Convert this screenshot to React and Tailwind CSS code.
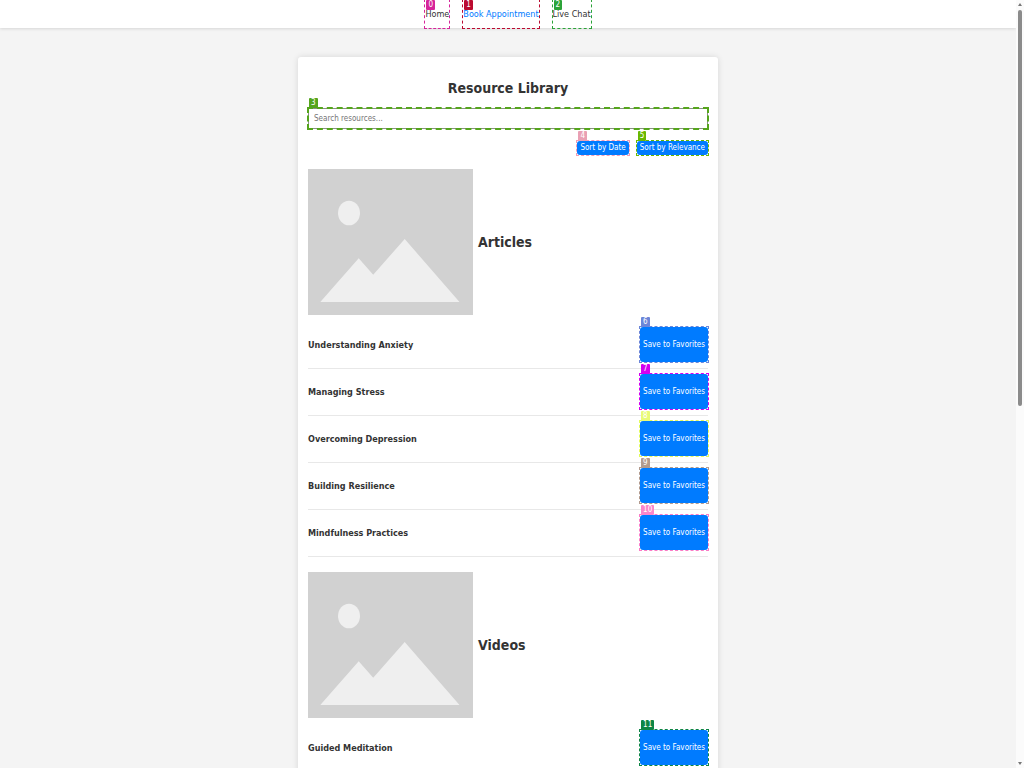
import React from "react";

const links = [
  { text: "Home", color: "text-[#333]", line: "border-[#d6249a]", fill: "bg-[#d6249a]" },
  { text: "Book Appointment", color: "text-[#007bff]", line: "border-[#bb0a30]", fill: "bg-[#bb0a30]" },
  { text: "Live Chat", color: "text-[#333]", line: "border-[#2ba338]", fill: "bg-[#2ba338]" },
];

const articles = [
  { title: "Understanding Anxiety", n: 6, line: "border-[#6c86d8]", fill: "bg-[#6c86d8]" },
  { title: "Managing Stress", n: 7, line: "border-[#d400f0]", fill: "bg-[#d400f0]" },
  { title: "Overcoming Depression", n: 8, line: "border-[#e2fa5a]", fill: "bg-[#e9fb78]" },
  { title: "Building Resilience", n: 9, line: "border-[#b39b8e]", fill: "bg-[#b39b8e]" },
  { title: "Mindfulness Practices", n: 10, line: "border-[#fb7cc6]", fill: "bg-[#fb86ca]" },
];

const videos = [
  { title: "Guided Meditation", n: 11, line: "border-[#0d8545]", fill: "bg-[#0d8545]" },
];

function Mark({ n, line, fill, top = "-top-[10px]", frame = "-inset-px border" }) {
  return (
    <>
      <span className={`pointer-events-none absolute border-dashed ${frame} ${line}`} />
      <span
        className={`pointer-events-none absolute left-px ${top} z-10 rounded-[1px] px-[2px] text-[8px] leading-[10px] font-normal text-white ${fill}`}
      >
        {n}
      </span>
    </>
  );
}

function Placeholder({ label }) {
  return (
    <svg role="img" aria-label={label} viewBox="0 0 165 146" className="h-[146px] w-[165px] shrink-0">
      <rect width="165" height="146" fill="#d1d1d1" />
      <ellipse cx="41" cy="44" rx="11" ry="12.3" fill="#efefef" />
      <path d="M12.3 133 50.7 89.3 65.2 105.7 96.7 70 151.5 133Z" fill="#efefef" />
    </svg>
  );
}

function Section({ title, items }) {
  return (
    <section className="mb-[15px]">
      <div className="mb-[7px] flex items-center gap-[5px]">
        <Placeholder label={title} />
        <h2 className="text-[14px] leading-[18px] font-bold">{title}</h2>
      </div>
      <ul>
        {items.map((item) => (
          <li key={item.n} className="flex items-center justify-between border-b border-[#e8e8e8] pt-[5px] pb-[6px]">
            <h3 className="text-[9px] leading-[12px] font-bold">{item.title}</h3>
            <button className="relative h-[35px] rounded-[3px] bg-[#007bff] px-[3px] text-[8px] leading-[10px] text-white">
              Save to Favorites
              <Mark {...item} />
            </button>
          </li>
        ))}
      </ul>
    </section>
  );
}

export default function App() {
  return (
    <div className="flex h-screen overflow-hidden bg-[#f4f4f4] font-['DejaVu_Sans_Condensed','DejaVu_Sans',sans-serif] text-[#333]">
      <div className="flex min-w-0 flex-1 flex-col">
        <nav className="flex h-[28px] shrink-0 justify-center gap-[14px] bg-white shadow-[0_1px_3px_rgba(0,0,0,0.12)]">
          {links.map((l, i) => (
            <a key={l.text} href="#" className={`relative flex items-center text-[9px] leading-[12px] ${l.color}`}>
              {l.text}
              <Mark n={i} line={l.line} fill={l.fill} top="top-0" />
            </a>
          ))}
        </nav>
        <main className="mx-auto mt-[29px] w-full max-w-[420px] shrink-0 rounded-[3px] bg-white px-[10px] pt-[21px] shadow-[0_0_6px_rgba(0,0,0,0.12)]">
          <h1 className="mb-[10px] text-center text-[14px] leading-[20px] font-bold">Resource Library</h1>
          <label className="relative mb-[12px] block">
            <input
              type="text"
              aria-label="Search resources"
              placeholder="Search resources..."
              className="block h-[21px] w-full border border-[#8a8f86] bg-white px-[5px] text-[8px] placeholder:text-[#757575]"
            />
            <Mark n={3} line="border-[#55a51c]" fill="bg-[#55a51c]" frame="-inset-px border-2" />
          </label>
          <div className="mb-[14px] flex justify-end gap-[8px]">
            <button className="relative h-[14px] rounded-[3px] bg-[#007bff] px-[3px] text-[8px] leading-[10px] text-white">
              Sort by Date
              <Mark n={4} line="border-[#f29ab4]" fill="bg-[#e9a0b4]" />
            </button>
            <button className="relative h-[14px] rounded-[3px] bg-[#007bff] px-[3px] text-[8px] leading-[10px] text-white">
              Sort by Relevance
              <Mark n={5} line="border-[#69b800]" fill="bg-[#69b800]" />
            </button>
          </div>
          <Section title="Articles" items={articles} />
          <Section title="Videos" items={videos} />
        </main>
      </div>
      <div aria-hidden="true" className="flex w-[8px] shrink-0 flex-col items-center bg-[#fbfbfb] py-[3px]">
        <svg viewBox="0 0 4 3" className="h-[3px] w-[4px]"><path d="M2 0 4 3H0Z" fill="#777" /></svg>
        <div className="mt-[4px] h-[52%] w-[4px] rounded-full bg-[#8b8b8b]" />
        <svg viewBox="0 0 4 3" className="mt-auto h-[3px] w-[4px]"><path d="M0 0H4L2 3Z" fill="#777" /></svg>
      </div>
    </div>
  );
}
